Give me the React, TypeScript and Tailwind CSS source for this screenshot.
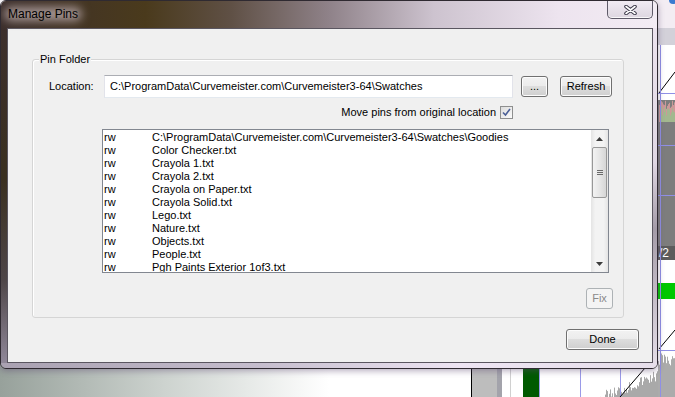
import React from 'react'

const files = [
  'C:\\ProgramData\\Curvemeister.com\\Curvemeister3-64\\Swatches\\Goodies',
  'Color Checker.txt',
  'Crayola 1.txt',
  'Crayola 2.txt',
  'Crayola on Paper.txt',
  'Crayola Solid.txt',
  'Lego.txt',
  'Nature.txt',
  'Objects.txt',
  'People.txt',
  'Pgh Paints Exterior 1of3.txt',
]

// vertical hairlines that make up the noisy histogram behind the dialog
function noise(x0: number, x1: number, top: (x: number) => number, bottom: number, spread: number, seed: number) {
  let s = seed
  const rnd = () => {
    s = (s * 9301 + 49297) % 233280
    return s / 233280
  }
  let d = ''
  for (let x = x0; x <= x1; x++) {
    const y = top(x) + rnd() * spread
    d += `M${x + 0.5} ${bottom}V${y.toFixed(1)}`
  }
  return d
}

function Backdrop() {
  return (
    <svg className="absolute inset-0" width={675} height={397} viewBox="0 0 675 397">
      <defs>
        <linearGradient id="desk" x1="0" x2="1" y1="0" y2="0">
          <stop offset="0" stopColor="#97a19b" />
          <stop offset="0.35" stopColor="#cdd3cf" />
          <stop offset="0.7" stopColor="#ffffff" />
        </linearGradient>
      </defs>
      <rect width={675} height={397} fill="#ffffff" />
      <rect x={0} y={355} width={470} height={42} fill="url(#desk)" />

      {/* right strip: the app behind */}
      <rect x={655} y={0} width={20} height={28} fill="#f3edf3" />
      <circle cx={673} cy={0} r={4} fill="#3b7bd0" />
      <rect x={655} y={28} width={20} height={17} fill="#d3d1d9" />
      <rect x={655} y={100} width={20} height={146} fill="#7d7d7d" />
      <path d={noise(659, 675, () => 100, 122, 10, 7)} stroke="#c99" strokeWidth={1} />
      <path d={noise(660, 675, () => 104, 122, 12, 3)} stroke="#8c8" strokeWidth={0.6} />
      <line x1={655} x2={675} y1={93.5} y2={93.5} stroke="#8f8fe6" />
      <line x1={655} x2={675} y1={145.5} y2={145.5} stroke="#8f8fe6" />
      <line x1={655} x2={675} y1={195.5} y2={195.5} stroke="#8f8fe6" />
      <line x1={659} x2={675} y1={93} y2={72} stroke="#000" />
      <rect x={655} y={246} width={20} height={14} fill="#5c5c5c" />
      <text x={659} y={257} fill="#fff" fontSize={12} fontFamily="Liberation Sans, sans-serif">
        /2
      </text>
      <rect x={655} y={283} width={20} height={16} fill="#00c800" />
      <line x1={655} x2={675} y1={350.5} y2={350.5} stroke="#8f8fe6" />
      <path d={noise(658, 675, () => 352, 397, 14, 11)} stroke="#ababab" strokeWidth={1} />
      <line x1={659} x2={675} y1={349} y2={330} stroke="#000" />
      <line x1={660.5} x2={660.5} y1={45} y2={397} stroke="#8f8fe6" />

      {/* below the dialog */}
      <rect x={471} y={360} width={31} height={37} fill="#bdbdbd" />
      <rect x={497} y={360} width={5} height={37} fill="#a3a3ab" />
      <line x1={471.5} x2={471.5} y1={360} y2={397} stroke="#000" />
      <line x1={510.5} x2={510.5} y1={360} y2={397} stroke="#d0d0d0" />
      <rect x={523} y={360} width={16} height={37} fill="#005a00" />
      <line x1={539.5} x2={539.5} y1={360} y2={397} stroke="#9a9ae8" />
      <line x1={580.5} x2={580.5} y1={360} y2={397} stroke="#9a9ae8" />
      <path d={noise(600, 657, (x) => 392 - (x - 600) * 0.4, 397, 12, 5)} stroke="#a9a9a9" strokeWidth={1} />
      <line x1={620.5} x2={620.5} y1={360} y2={397} stroke="#9a9ae8" />
      <line x1={620} x2={645} y1={397} y2={368} stroke="#000" />
    </svg>
  )
}

function WinButton({ label, w, disabled }: { label: string; w: string; disabled?: boolean }) {
  return (
    <button
      className={
        disabled
          ? `${w} h-[21px] rounded-[3px] border border-[#adb2b5] bg-[#f4f4f4] text-[11px] text-[#8a8a8a]`
          : `${w} h-[21px] rounded-[3px] border border-[#707070] bg-[linear-gradient(#f2f2f2_0%,#ebebeb_50%,#dddddd_50%,#cfcfcf_100%)] text-[11px] text-black shadow-[inset_0_0_0_1px_#fcfcfc]`
      }
    >
      {label}
    </button>
  )
}

function Arrow({ down }: { down?: boolean }) {
  return (
    <div className="flex h-[17px] items-center justify-center">
      <svg width="7" height="4" viewBox="0 0 7 4">
        <path d={down ? 'M0 0H7L3.5 4Z' : 'M0 4H7L3.5 0Z'} fill="#3c3c3c" />
      </svg>
    </div>
  )
}

export default function App() {
  return (
    <div className="relative h-[397px] w-[675px] overflow-hidden font-['Liberation_Sans',Arial,sans-serif]">
      <Backdrop />

      {/* Manage Pins window */}
      <div className="absolute left-0 top-0 flex h-[369px] w-[658px] flex-col overflow-hidden rounded-[6px] border border-[#2f2a31] shadow-[0_2px_6px_rgba(90,70,110,0.45)]">
        {/* Title bar */}
        <div className="flex h-[27px] items-start bg-[linear-gradient(90deg,#3c2f2c_0%,#4a3a1c_22%,#5f5045_35%,#8f8289_50%,#cdc3cf_66%,#ede4ef_85%,#f3ecf4_100%)]">
          <span className="relative isolate ml-[7px] mt-[5px] text-[12px] leading-[16px] text-black">
            <span className="absolute -inset-x-[4px] inset-y-[1px] -z-10 rounded-full bg-[#a39391] blur-[5px]" />
            Manage Pins
          </span>
          <button className="ml-auto mr-[4px] flex h-[18px] w-[46px] items-center justify-center rounded-b-[5px] border border-t-0 border-[#5e5a68] bg-[linear-gradient(#f1ebf3,#ddd6e0)] shadow-[inset_0_-1px_0_rgba(255,255,255,0.8)]">
            <svg width="13" height="10" viewBox="0 0 13 10">
              <path d="M2 1.5L11 8.5M11 1.5L2 8.5" stroke="#3d3a4a" strokeWidth="3.6" strokeLinecap="round" />
              <path d="M2 1.5L11 8.5M11 1.5L2 8.5" stroke="#ffffff" strokeWidth="1.6" strokeLinecap="round" />
            </svg>
          </button>
        </div>

        <div className="flex flex-1">
          {/* left frame */}
          <div className="w-[6px] bg-[linear-gradient(#3c2f2c,#3a3020_45%,#4e4648_75%,#8f8798)]" />

          {/* Client area */}
          <div className="flex flex-1 flex-col border border-[#5a5660] bg-[#f0f0f0] pl-[24px] pt-[30px] text-[11px] text-black">
            {/* Pin Folder group */}
            <div className="relative flex h-[259px] w-[592px] flex-col rounded-[3px] border border-[#d5d5d5] shadow-[inset_1px_1px_0_#ffffff]">
              <span className="absolute -top-[8px] left-[6px] bg-[#f0f0f0] px-[1px] leading-[14px]">Pin Folder</span>

              <div className="mt-[15px] flex h-[23px] items-center">
                <span className="w-[71px] pl-[16px]">Location:</span>
                <div className="flex h-[23px] w-[409px] items-center border border-[#abadb3] border-b-[#e3e9ef] border-l-[#e2e3ea] border-r-[#e2e3ea] bg-white pl-[5px] whitespace-nowrap">
                  C:\ProgramData\Curvemeister.com\Curvemeister3-64\Swatches
                </div>
                <div className="ml-[8px]">
                  <WinButton label="..." w="w-[27px]" />
                </div>
                <div className="ml-[12px]">
                  <WinButton label="Refresh" w="w-[52px]" />
                </div>
              </div>

              <div className="mt-[8px] flex h-[13px] w-[480px] items-center justify-end gap-[4px]">
                <span>Move pins from original location</span>
                <span className="flex h-[13px] w-[13px] items-center justify-center border border-[#8e8f8f] bg-[linear-gradient(135deg,#dcdcdc,#fbfbfb)]">
                  <svg width="9" height="9" viewBox="0 0 9 9">
                    <path d="M1 4.5L3.5 7L8 1" fill="none" stroke="#4a5f97" strokeWidth="1.6" />
                  </svg>
                </span>
              </div>

              {/* File list */}
              <div className="ml-[69px] mt-[10px] flex h-[144px] w-[507px] border border-[#828790] bg-white">
                <div className="flex-1 overflow-hidden pt-[1px]">
                  {files.map((f) => (
                    <div key={f} className="flex h-[13px] leading-[13px] whitespace-nowrap">
                      <span className="w-[49px] pl-[1px]">rw</span>
                      <span>{f}</span>
                    </div>
                  ))}
                </div>
                <div className="flex w-[17px] flex-col bg-[linear-gradient(90deg,#e4e4e4,#f3f3f3_25%,#f3f3f3_75%,#e4e4e4)]">
                  <Arrow />
                  <div className="mx-[1px] flex h-[51px] items-center justify-center rounded-[2px] border border-[#989898] bg-[linear-gradient(90deg,#f3f3f3,#e6e6e6_50%,#d6d6d6)]">
                    <div className="flex w-[6px] flex-col gap-[1px]">
                      <div className="h-[1px] bg-[#6a6a6a]" />
                      <div className="h-[1px] bg-[#6a6a6a]" />
                      <div className="h-[1px] bg-[#6a6a6a]" />
                    </div>
                  </div>
                  <div className="flex-1" />
                  <Arrow down />
                </div>
              </div>

              <div className="mt-[15px] flex justify-end pr-[10px]">
                <WinButton label="Fix" w="w-[27px]" disabled />
              </div>
            </div>

            <div className="mt-[11px] flex justify-end pr-[13px]">
              <WinButton label="Done" w="w-[73px]" />
            </div>
          </div>

          {/* right frame */}
          <div className="w-[4px] bg-[linear-gradient(#ece3ee,#e0d8e4_40%,#a49ca8_60%,#e4dde7)]" />
        </div>

        {/* bottom frame */}
        <div className="h-[5px] bg-[linear-gradient(90deg,#a9a1b1,#c6bece_40%,#eee5f3_70%,#e6deea)]" />
      </div>
    </div>
  )
}
